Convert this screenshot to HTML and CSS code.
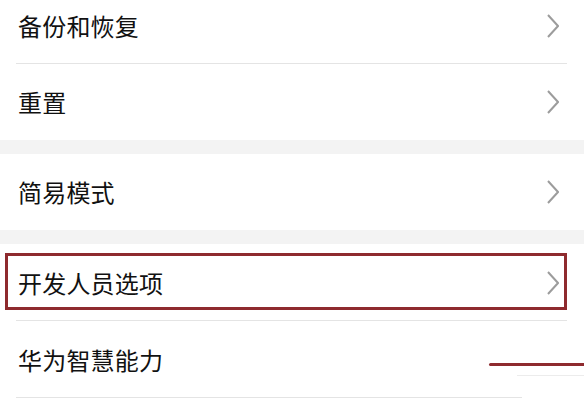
FILE: index.html
```html
<html>
  <head>
    <meta charset="utf-8">
    <title>设置</title>
    <link rel="stylesheet" href="styles.css">
  </head>
  <body>
    <div class="page">
      <div class="group first">
        <div class="row"><span class="label">备份和恢复</span><svg class="chev" viewBox="0 0 12 24"><polyline points="1,1 11,12 1,23"/></svg></div>
        <div class="row last"><span class="label">重置</span><svg class="chev" viewBox="0 0 12 24"><polyline points="1,1 11,12 1,23"/></svg></div>
      </div>
      <div class="gap"></div>
      <div class="group">
        <div class="row last"><span class="label">简易模式</span><svg class="chev" viewBox="0 0 12 24"><polyline points="1,1 11,12 1,23"/></svg></div>
      </div>
      <div class="gap"></div>
      <div class="group">
        <div class="row"><span class="label">开发人员选项</span><svg class="chev" viewBox="0 0 12 24"><polyline points="1,1 11,12 1,23"/></svg></div>
        <div class="row bottom"><span class="label">华为智慧能力</span></div>
      </div>
      <!-- annotation marks drawn over the screenshot -->
      <div class="mark-box"></div>
      <div class="mark-line"></div>
      <div class="mark-faint"></div>
    </div>
  </body>
</html>
```

FILE: styles.css
```css
* {box-sizing: border-box;}
body {margin: 0; background: #fff; font-family: "Noto Sans CJK SC", "Noto Sans", sans-serif; overflow: hidden;}
.page {position: relative; width: 584px; height: 400px; overflow: hidden;}
.group.first {margin-top: -13px;}
.row {height: 77px; padding: 0 25px 0 18px; display: flex; align-items: center; justify-content: space-between; position: relative;}
.row::after {content: ""; position: absolute; left: 16px; right: 17px; bottom: 0; height: 1px; background: #e4e4e4;}
.row.last {height: 76px;}
.row.last::after {display: none;}
.row.bottom::after {right: 62px;}
.label {font-size: 24px; color: #111; letter-spacing: 0.2px; line-height: 1;}
.chev {width: 12px; height: 24px; fill: none; stroke: #9c9c9c; stroke-width: 2;}
.gap {height: 14px; background: #f3f3f3;}
.mark-box {position: absolute; left: 5px; top: 253px; width: 562px; height: 57px; border: 3px solid #8e2a2e;}
.mark-line {position: absolute; left: 489px; top: 363px; width: 95px; height: 3px; background: #8e2a2e; border-radius: 2px 0 0 2px;}
.mark-faint {position: absolute; left: 517px; top: 375px; width: 67px; height: 1px; background: #ececec;}
```
